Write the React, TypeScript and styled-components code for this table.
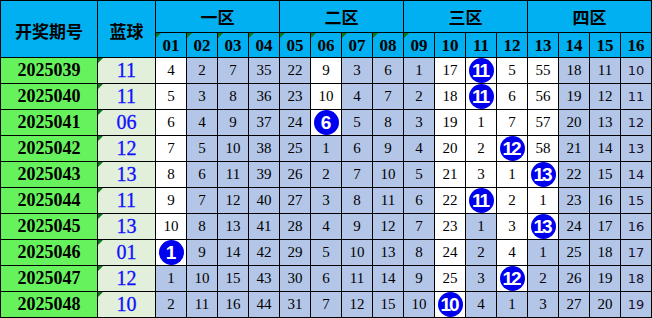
import React from "react";
import styled, { createGlobalStyle } from "styled-components";

const GlobalStyle = createGlobalStyle`
  body {
    margin: 0;
    background: #ffffff;
  }
`;

type Entry = number | { ball: number };

interface Draw {
  issue: string;
  blue: string;
  nums: Entry[];
}

const ZONES = ["一区", "二区", "三区", "四区"];
const COLS = Array.from({ length: 16 }, (_, i) => String(i + 1).padStart(2, "0"));

const draws: Draw[] = [
  { issue: "2025039", blue: "11", nums: [4, 2, 7, 35, 22, 9, 3, 6, 1, 17, { ball: 11 }, 5, 55, 18, 11, 10] },
  { issue: "2025040", blue: "11", nums: [5, 3, 8, 36, 23, 10, 4, 7, 2, 18, { ball: 11 }, 6, 56, 19, 12, 11] },
  { issue: "2025041", blue: "06", nums: [6, 4, 9, 37, 24, { ball: 6 }, 5, 8, 3, 19, 1, 7, 57, 20, 13, 12] },
  { issue: "2025042", blue: "12", nums: [7, 5, 10, 38, 25, 1, 6, 9, 4, 20, 2, { ball: 12 }, 58, 21, 14, 13] },
  { issue: "2025043", blue: "13", nums: [8, 6, 11, 39, 26, 2, 7, 10, 5, 21, 3, 1, { ball: 13 }, 22, 15, 14] },
  { issue: "2025044", blue: "11", nums: [9, 7, 12, 40, 27, 3, 8, 11, 6, 22, { ball: 11 }, 2, 1, 23, 16, 15] },
  { issue: "2025045", blue: "13", nums: [10, 8, 13, 41, 28, 4, 9, 12, 7, 23, 1, 3, { ball: 13 }, 24, 17, 16] },
  { issue: "2025046", blue: "01", nums: [{ ball: 1 }, 9, 14, 42, 29, 5, 10, 13, 8, 24, 2, 4, 1, 25, 18, 17] },
  { issue: "2025047", blue: "12", nums: [1, 10, 15, 43, 30, 6, 11, 14, 9, 25, 3, { ball: 12 }, 2, 26, 19, 18] },
  { issue: "2025048", blue: "10", nums: [2, 11, 16, 44, 31, 7, 12, 15, 10, { ball: 10 }, 4, 1, 3, 27, 20, 19] },
];

// a cell stays white down to the last row where its column was hit
const lastHit: number[] = COLS.map((_, c) => {
  let last = -1;
  draws.forEach((d, r) => {
    if (typeof d.nums[c] === "object") last = r;
  });
  return last;
});

const Sheet = styled.div`
  display: grid;
  grid-template-columns: 96px 57px repeat(16, 30px);
  grid-template-rows: 31px 24px repeat(10, 25px);
  gap: 1px;
  padding: 1px;
  width: max-content;
  background: #000000;
`;

const Cell = styled.div<{ $mark?: boolean }>`
  position: relative;
  display: flex;
  align-items: center;
  justify-content: center;
  overflow: hidden;

  &::before {
    content: "";
    display: ${(p) => (p.$mark ? "block" : "none")};
    position: absolute;
    top: 0;
    left: 0;
    border-top: 5px solid #0b7a1e;
    border-right: 5px solid transparent;
  }
`;

const TitleCell = styled(Cell)`
  grid-row: span 2;
  background: #00b0f0;
  color: #000;
  font-family: "Noto Sans CJK SC", sans-serif;
  font-weight: 700;
  font-size: 17px;
  padding-top: 3px;
`;

const ZoneCell = styled(Cell)`
  grid-column: span 4;
  background: #00b0f0;
  color: #000;
  font-family: "Noto Sans CJK SC", sans-serif;
  font-weight: 700;
  font-size: 17px;
`;

const ColCell = styled(Cell)`
  background: #00b0f0;
  color: #000;
  font-family: "Liberation Serif", serif;
  font-weight: 700;
  font-size: 17px;
  padding-top: 1px;
`;

const IssueCell = styled(Cell)`
  background: #66f25c;
  color: #000;
  font-family: "Liberation Serif", serif;
  font-weight: 700;
  font-size: 18px;
`;

const BlueCell = styled(Cell)`
  background: #e2efda;
  color: #1010ff;
  font-family: "Liberation Serif", serif;
  font-size: 20px;
  -webkit-text-stroke: 0.3px #1010ff;
`;

const NumCell = styled(Cell)<{ $open: boolean; $alt?: boolean }>`
  background: ${(p) => (p.$open ? "#ffffff" : "#b4c6e7")};
  color: ${(p) => (p.$alt ? "#1a1030" : "#000")};
  font-family: ${(p) => (p.$alt ? '"DejaVu Sans", sans-serif' : '"Liberation Serif", serif')};
  font-size: ${(p) => (p.$alt ? "13px" : "15px")};
`;

const Ball = styled.span`
  display: flex;
  align-items: center;
  justify-content: center;
  width: 25px;
  height: 25px;
  border-radius: 50%;
  background: #0000f0;
  color: #ffffff;
  font-family: "Liberation Sans", sans-serif;
  font-weight: 700;
  font-size: 19px;
  letter-spacing: -2px;
  text-indent: -2px;
`;

export default function App() {
  return (
    <>
      <GlobalStyle />
      <Sheet>
        <TitleCell>开奖期号</TitleCell>
        <TitleCell>蓝球</TitleCell>
        {ZONES.map((z) => (
          <ZoneCell key={z}>{z}</ZoneCell>
        ))}
        {COLS.map((c, i) => (
          <ColCell key={c} $mark={i < 9}>
            {c}
          </ColCell>
        ))}
        {draws.map((d, r) => (
          <React.Fragment key={d.issue}>
            <IssueCell>{d.issue}</IssueCell>
            <BlueCell $mark>{d.blue}</BlueCell>
            {d.nums.map((n, c) => (
              <NumCell key={c} $open={r <= lastHit[c]} $alt={c === 15}>
                {typeof n === "object" ? <Ball>{n.ball}</Ball> : n}
              </NumCell>
            ))}
          </React.Fragment>
        ))}
      </Sheet>
    </>
  );
}
